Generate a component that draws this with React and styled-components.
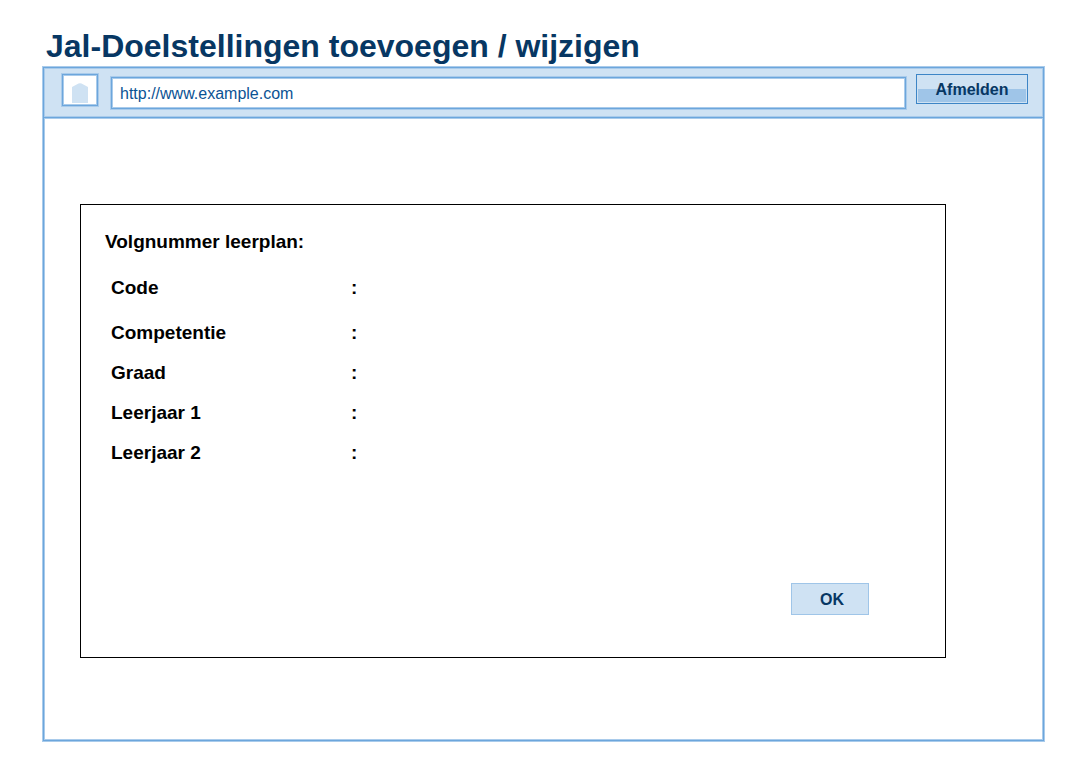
import React from "react";
import styled, { createGlobalStyle, css } from "styled-components";

const GlobalStyle = createGlobalStyle`
  *, *::before, *::after { box-sizing: border-box; }
  body {
    margin: 0;
    background: #ffffff;
    font-family: "Liberation Sans", Arial, sans-serif;
  }
`;

const softLine = css`
  border: 1px solid #6ca6dc;
  box-shadow: 0 0 0 1px #a9cbeb, inset 0 0 0 1px #a9cbeb;
`;

const Page = styled.main`
  display: flex;
  flex-direction: column;
  min-height: 100vh;
  padding: 27px 40px 27px 43px;
`;

const Title = styled.h1`
  margin: 0;
  padding: 0 0 2px 3px;
  font-size: 32px;
  line-height: 38px;
  font-weight: 700;
  color: #073763;
`;

const BrowserWindow = styled.section`
  ${softLine}
  flex: 1;
  display: flex;
  flex-direction: column;
`;

const Toolbar = styled.header`
  display: flex;
  align-items: flex-start;
  height: 50px;
  padding: 6px 15px 0 18px;
  background: #cfe2f3;
  box-shadow: inset 0 0 0 1px #a9cbeb, 0 1px 0 #a9cbeb;
  border-bottom: 1px solid #6ca6dc;
`;

const HomeButton = styled.button`
  ${softLine}
  display: flex;
  align-items: flex-end;
  justify-content: center;
  width: 36px;
  height: 32px;
  padding: 0 0 2px;
  background: #ffffff;
`;

const AddressInput = styled.input`
  ${softLine}
  flex: 1;
  min-width: 0;
  height: 32px;
  margin: 3px 10px 0 13px;
  padding: 2px 8px 0;
  border-radius: 0;
  background: #ffffff;
  color: #0b5394;
  font-family: inherit;
  font-size: 16px;
`;

const LogoutButton = styled.button`
  width: 112px;
  height: 30px;
  padding: 2px 0 0;
  border: 1px solid #3d85c6;
  background: linear-gradient(#cfe2f3 50%, #9fc5e8 50%) center / calc(100% - 2px) calc(100% - 2px) no-repeat #cfe2f3;
  color: #073763;
  font-family: inherit;
  font-size: 16px;
  font-weight: 700;
`;

const Content = styled.div`
  flex: 1;
  display: flex;
  padding: 86px 97px 82px 36px;
`;

const Panel = styled.form`
  flex: 1;
  display: flex;
  flex-direction: column;
  padding: 17px 76px 42px 24px;
  border: 1px solid #000000;
  color: #000000;
`;

const PanelTitle = styled.h2`
  margin: 0;
  font-size: 19px;
  line-height: 40px;
  font-weight: 700;
`;

const FieldList = styled.dl`
  margin: 0;
  padding: 6px 0 0 6px;
`;

const Field = styled.div`
  display: flex;
  margin-bottom: ${({ $spaced }) => ($spaced ? "5px" : "0")};
  font-size: 19px;
  line-height: 40px;
  font-weight: 700;
`;

const FieldName = styled.dt`
  width: 240px;
`;

const FieldValue = styled.dd`
  margin: 0;
`;

const OkButton = styled.button`
  align-self: flex-end;
  width: 78px;
  height: 32px;
  margin-top: auto;
  padding: 2px 0 0 4px;
  border: 1px solid #9fc5e8;
  background: #cfe2f3;
  color: #073763;
  font-family: inherit;
  font-size: 16px;
  font-weight: 700;
`;

const fields = [
  { name: "Code", spaced: true },
  { name: "Competentie" },
  { name: "Graad" },
  { name: "Leerjaar 1" },
  { name: "Leerjaar 2" },
];

export default function App() {
  return (
    <>
      <GlobalStyle />
      <Page>
        <Title>Jal-Doelstellingen toevoegen / wijzigen</Title>
        <BrowserWindow>
          <Toolbar>
            <HomeButton type="button" aria-label="Home">
              <svg width="16" height="20" viewBox="0 0 16 20" aria-hidden="true">
                <path d="M0 20V4L6.5 .6Q8-.2 9.500 .6L16 4V20Z" fill="#cfe2f3" />
              </svg>
            </HomeButton>
            <AddressInput aria-label="Adres" defaultValue="http://www.example.com" />
            <LogoutButton type="button">Afmelden</LogoutButton>
          </Toolbar>
          <Content>
            <Panel>
              <PanelTitle>Volgnummer leerplan:</PanelTitle>
              <FieldList>
                {fields.map(({ name, spaced }) => (
                  <Field key={name} $spaced={spaced}>
                    <FieldName>{name}</FieldName>
                    <FieldValue>:</FieldValue>
                  </Field>
                ))}
              </FieldList>
              <OkButton type="button">OK</OkButton>
            </Panel>
          </Content>
        </BrowserWindow>
      </Page>
    </>
  );
}
